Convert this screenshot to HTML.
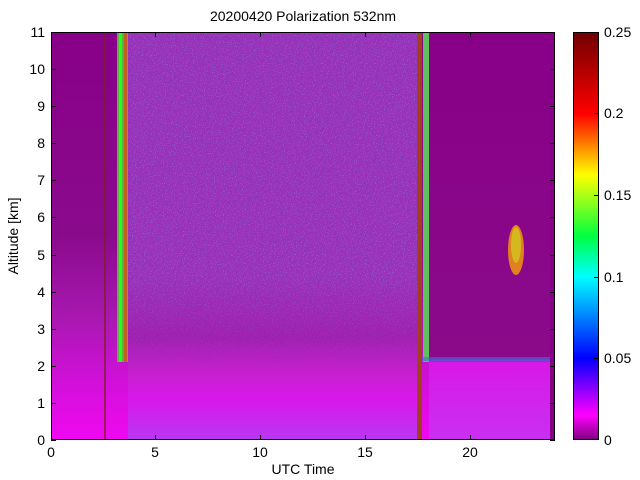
<!DOCTYPE html><html><head><style>body{margin:0;background:#fff}svg{display:block;font-family:"Liberation Sans",sans-serif}</style></head><body>
<svg width="640" height="480" xmlns="http://www.w3.org/2000/svg">
<defs>
<linearGradient id="cb" x1="0" y1="1" x2="0" y2="0">
<stop offset="0" stop-color="#800080"/><stop offset="0.06" stop-color="#ff00ff"/><stop offset="0.2" stop-color="#0000ff"/><stop offset="0.4" stop-color="#00ffff"/><stop offset="0.5" stop-color="#00ff40"/><stop offset="0.65" stop-color="#ffff00"/><stop offset="0.8" stop-color="#ff0000"/><stop offset="1" stop-color="#700000"/></linearGradient>
<linearGradient id="lft" x1="0" y1="0" x2="0" y2="1">
<stop offset="0" stop-color="#880088"/><stop offset="0.5" stop-color="#8a0a8c"/><stop offset="0.7" stop-color="#a818b0"/><stop offset="0.85" stop-color="#d010d8"/><stop offset="1" stop-color="#f008f0"/></linearGradient>
<linearGradient id="mid" x1="0" y1="0" x2="0" y2="1">
<stop offset="0" stop-color="#9830b8"/><stop offset="0.6" stop-color="#9a30b8"/><stop offset="0.75" stop-color="#a020b0"/><stop offset="0.84" stop-color="#c820d0"/><stop offset="0.9" stop-color="#d818ec"/><stop offset="1" stop-color="#b838f0"/></linearGradient>
<linearGradient id="rt" x1="0" y1="0" x2="0" y2="1">
<stop offset="0" stop-color="#880088"/><stop offset="0.8" stop-color="#8a0a8a"/><stop offset="0.81" stop-color="#d818e8"/><stop offset="1" stop-color="#c830f0"/></linearGradient>
<linearGradient id="fade" x1="0" y1="0" x2="0" y2="1"><stop offset="0" stop-color="#fff"/><stop offset="0.6" stop-color="#fff"/><stop offset="0.85" stop-color="#000"/></linearGradient>
<mask id="m"><rect x="0" y="32" width="640" height="408" fill="url(#fade)"/></mask>
<filter id="nz"><feTurbulence type="fractalNoise" baseFrequency="0.9" numOctaves="1" seed="3"/><feColorMatrix values="0 0 0 0 0.2 0 0 0 0 0.6 0 0 0 0 1 3 0 0 0 -1.6"/><feComposite in2="SourceGraphic" operator="in"/></filter>
</defs>
<rect x="51" y="32" width="504" height="408" fill="url(#lft)"/>
<rect x="128" y="32" width="290" height="408" fill="url(#mid)"/>
<rect x="128" y="32" width="290" height="408" fill="#fff" filter="url(#nz)" opacity="0.5" mask="url(#m)"/>
<rect x="117" y="32" width="11" height="330" fill="#60b040"/>
<rect x="119" y="32" width="3" height="330" fill="#20ff20"/>
<rect x="124" y="32" width="3" height="330" fill="#c06020"/>
<rect x="104" y="32" width="2" height="408" fill="#802020" opacity="0.7"/>
<rect x="417" y="32" width="5" height="408" fill="#a04020"/>
<rect x="423" y="32" width="6" height="330" fill="#60c060"/>
<rect x="429" y="32" width="121" height="408" fill="url(#rt)"/>
<rect x="422" y="357" width="128" height="4" fill="#4070e0" opacity="0.6"/>
<ellipse cx="516" cy="250" rx="8" ry="25" fill="#e08020"/>
<ellipse cx="516" cy="245" rx="5" ry="18" fill="#d0d020" opacity="0.7"/>
<rect x="550" y="32" width="5" height="408" fill="#880088"/>
<g stroke="#000" fill="none" stroke-width="1">
<rect x="51.5" y="32.5" width="503" height="407"/>
<rect x="573.5" y="32.5" width="25" height="407" fill="url(#cb)"/>
<path d="M51 440.5h5M51 403.5h5M51 366.5h5M51 329.5h5M51 292.5h5M51 255.5h5M51 217.5h5M51 180.5h5M51 143.5h5M51 106.5h5M51 69.5h5M555 440.5h-5M555 403.5h-5M555 366.5h-5M555 329.5h-5M555 292.5h-5M555 255.5h-5M555 217.5h-5M555 180.5h-5M555 143.5h-5M555 106.5h-5M555 69.5h-5M155.5 440v-5M260.5 440v-5M365.5 440v-5M470.5 440v-5M155.5 32v5M260.5 32v5M365.5 32v5M470.5 32v5M599 358.5h-5M599 277.5h-5M599 195.5h-5M599 113.5h-5"/>
</g>
<g font-size="14" fill="#000">
<text x="303" y="21" text-anchor="middle">20200420 Polarization 532nm</text>
<g text-anchor="end"><text x="45" y="445">0</text><text x="45" y="408">1</text><text x="45" y="371">2</text><text x="45" y="334">3</text><text x="45" y="297">4</text><text x="45" y="260">5</text><text x="45" y="222">6</text><text x="45" y="185">7</text><text x="45" y="148">8</text><text x="45" y="111">9</text><text x="45" y="74">10</text><text x="45" y="37">11</text></g>
<g text-anchor="middle"><text x="51" y="457">0</text><text x="155" y="457">5</text><text x="260" y="457">10</text><text x="365" y="457">15</text><text x="470" y="457">20</text></g>
<text x="303" y="474" text-anchor="middle">UTC Time</text>
<text transform="translate(18,236) rotate(-90)" text-anchor="middle">Altitude [km]</text>
<text x="604" y="445">0</text><text x="604" y="363">0.05</text><text x="604" y="282">0.1</text><text x="604" y="200">0.15</text><text x="604" y="118">0.2</text><text x="604" y="37">0.25</text>
</g>
</svg></body></html>
